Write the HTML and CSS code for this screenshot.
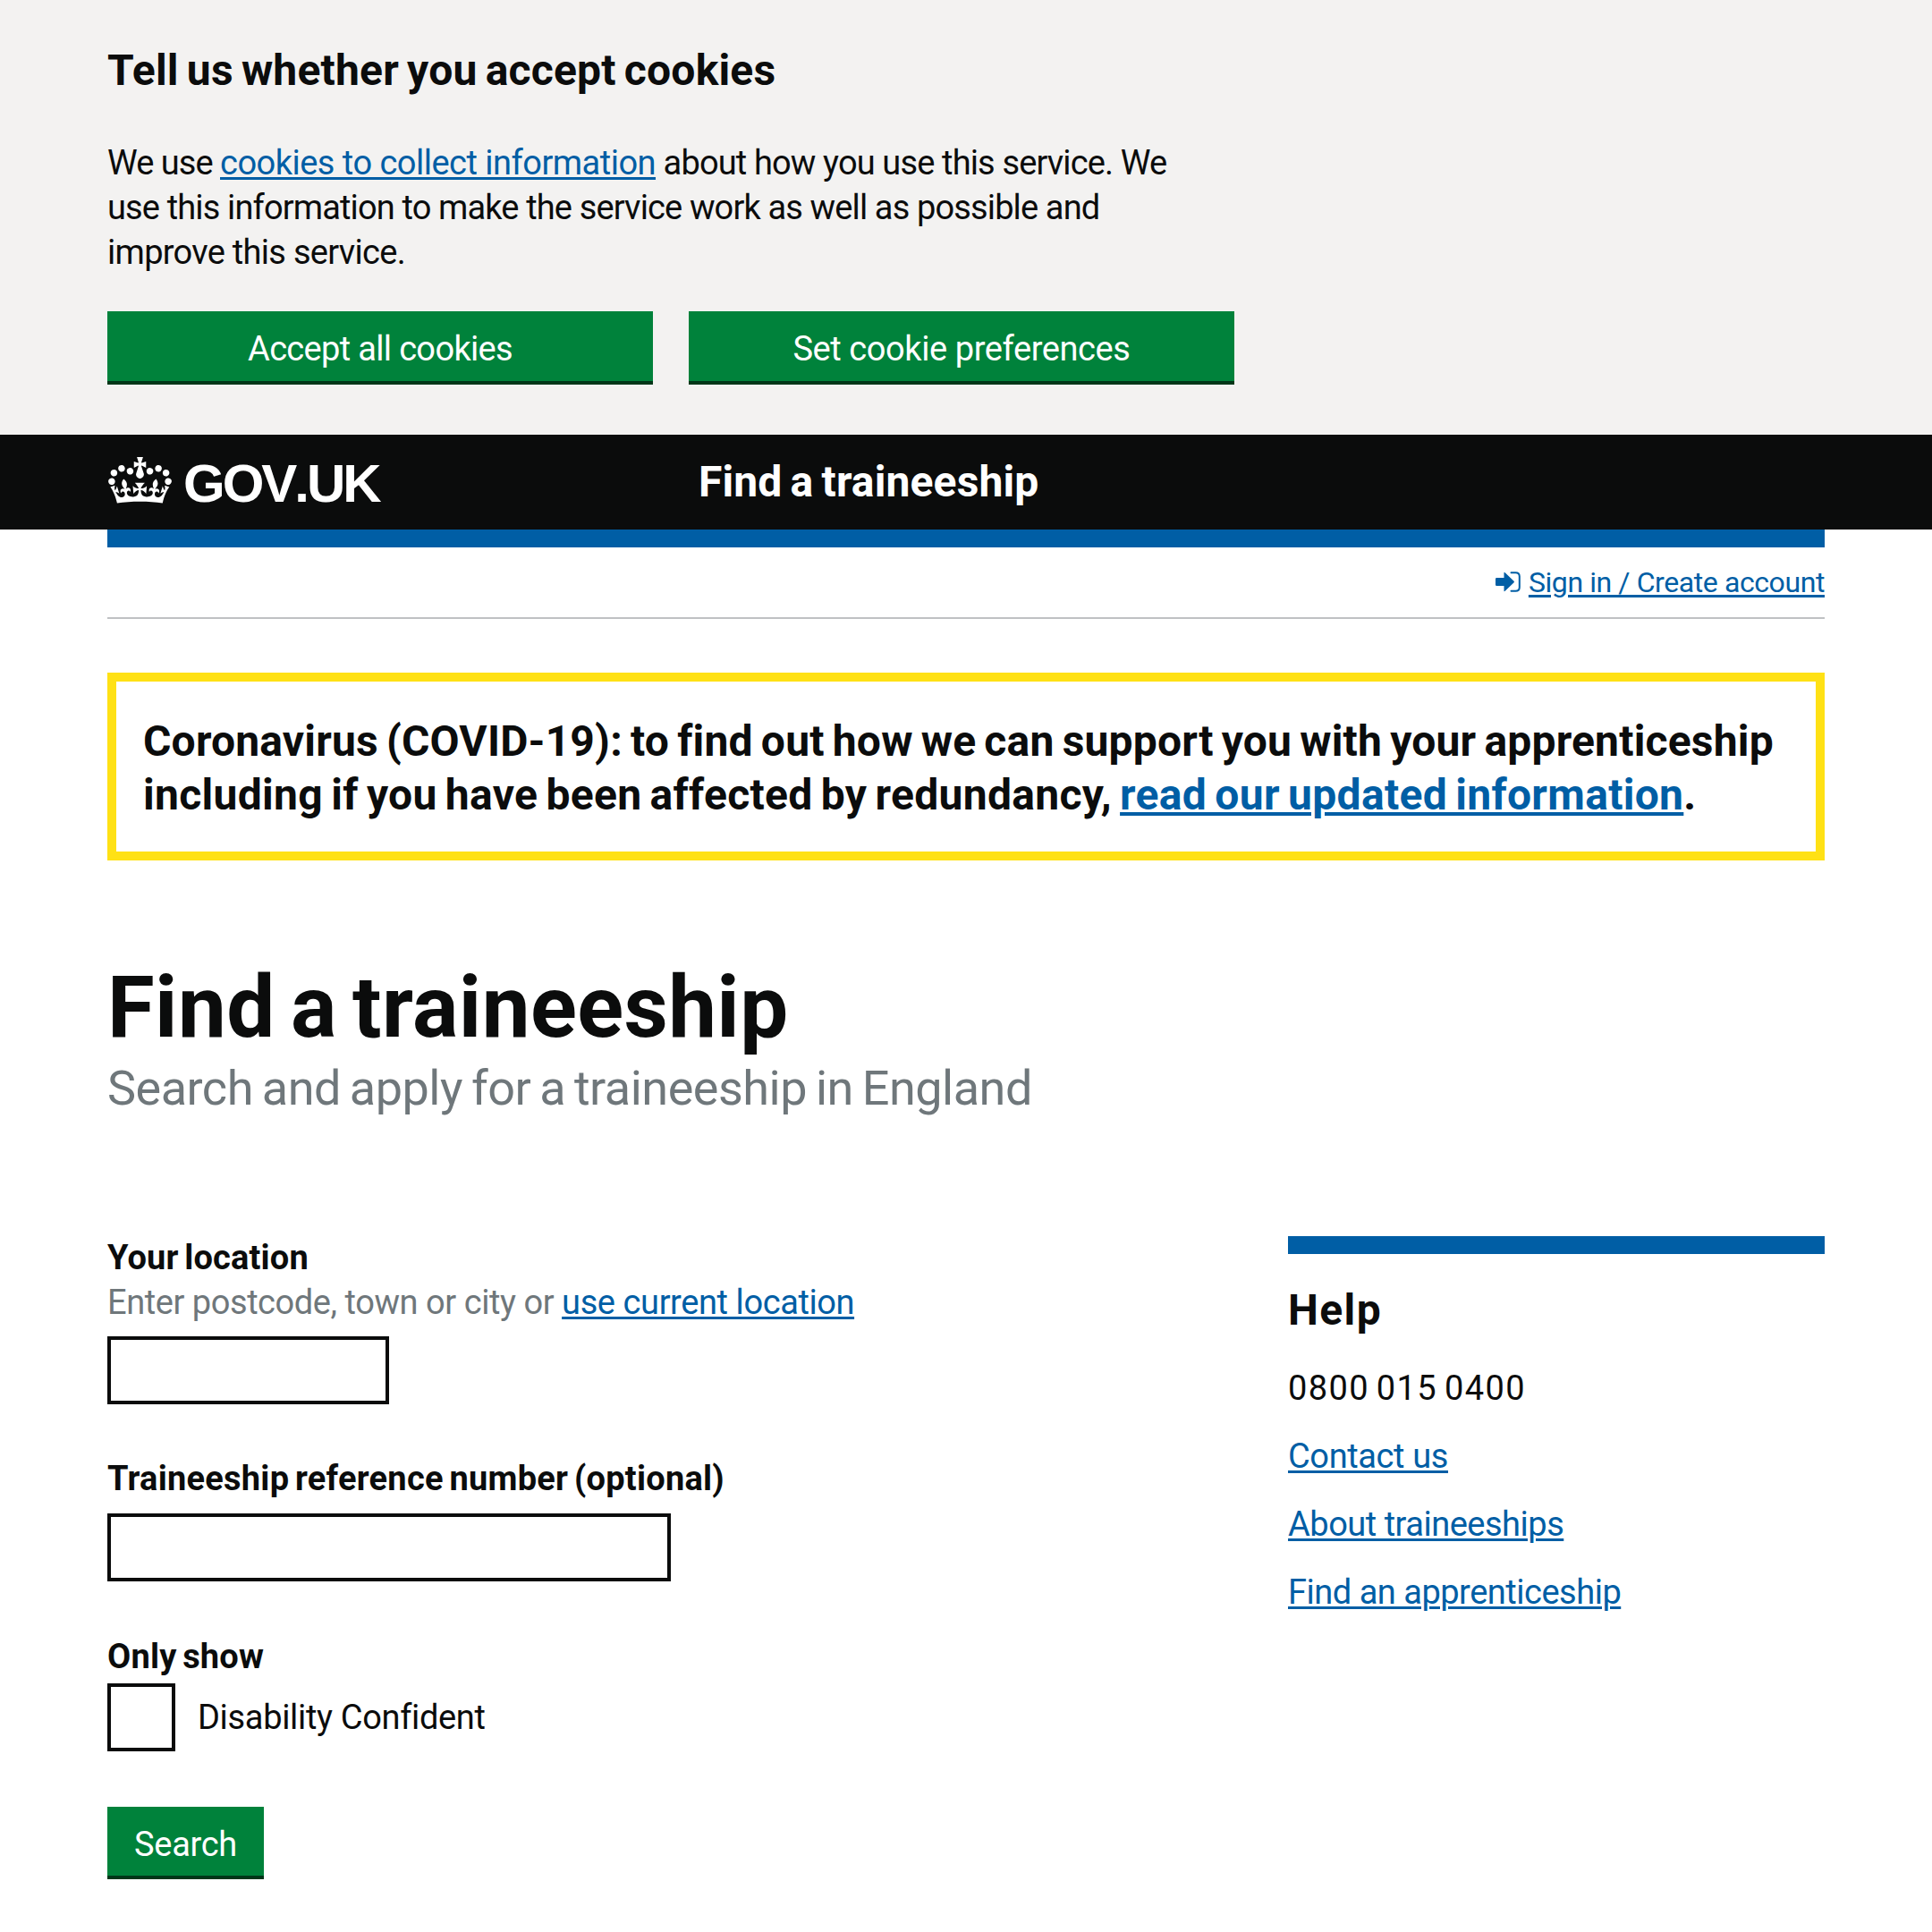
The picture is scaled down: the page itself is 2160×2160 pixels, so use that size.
FILE: index.html
```html
<!DOCTYPE html>
<html lang="en">
<head>
  <meta charset="utf-8">
  <title>Find a traineeship</title>
  <link rel="stylesheet" href="styles.css">
</head>
<body>
  <section class="cookie-banner">
    <div class="container">
      <h2 class="heading-m cookie-title">Tell us whether you accept cookies</h2>
      <p class="cookie-text"><span class="we-use">We use </span><a class="link cookie-link" href="#">cookies to collect information</a><span class="cookie-rest"> about how you use this service. We</span><br><span class="cookie-rest">use this information to make the service work as well as possible and</span><br><span class="cookie-end">improve this service.</span></p>
      <div class="cookie-actions">
        <button class="button accept">Accept all cookies</button>
        <button class="button preferences">Set cookie preferences</button>
      </div>
    </div>
  </section>

  <header class="header">
    <div class="container header-row">
      <a class="logo" href="#">
        <svg class="crown" viewBox="0 0 132 97" aria-hidden="true"><path fill="currentColor" fill-rule="evenodd" d="M25 30.2c3.5 1.5 7.7-.2 9.1-3.7 1.5-3.6-.2-7.8-3.9-9.2-3.6-1.4-7.6.3-9.1 3.9-1.4 3.5.3 7.5 3.9 9zM9 39.5c3.6 1.5 7.8-.2 9.2-3.7 1.5-3.6-.2-7.8-3.9-9.1-3.6-1.5-7.6.2-9.1 3.8-1.4 3.5.3 7.5 3.8 9zM4.4 57.2c3.5 1.5 7.7-.2 9.1-3.8 1.5-3.6-.2-7.7-3.9-9.1-3.5-1.5-7.6.3-9.1 3.8-1.4 3.5.3 7.6 3.9 9.1zm38.3-21.4c3.5 1.5 7.7-.2 9.1-3.8 1.5-3.6-.2-7.7-3.9-9.1-3.6-1.5-7.6.3-9.1 3.8-1.3 3.6.4 7.7 3.9 9.1zm64.4-5.6c-3.6 1.5-7.8-.2-9.1-3.7-1.5-3.6.2-7.8 3.8-9.2 3.6-1.4 7.7.3 9.2 3.9 1.3 3.5-.4 7.5-3.9 9zm15.9 9.3c-3.6 1.5-7.7-.2-9.1-3.7-1.5-3.6.2-7.8 3.7-9.1 3.6-1.5 7.7.2 9.2 3.8 1.5 3.5-.3 7.5-3.8 9zm4.7 17.7c-3.6 1.5-7.8-.2-9.2-3.8-1.5-3.6.2-7.7 3.9-9.1 3.6-1.5 7.7.3 9.2 3.8 1.3 3.5-.4 7.6-3.9 9.1zM89.3 35.8c-3.6 1.5-7.8-.2-9.2-3.8-1.4-3.6.2-7.7 3.9-9.1 3.6-1.5 7.7.3 9.2 3.8 1.4 3.6-.3 7.7-3.9 9.1zM69.7 17.7l8.9 4.7V9.3l-8.9 2.8c-.2-.3-.5-.6-.9-.9L72.4 0H59.6l3.5 11.2c-.3.3-.6.5-.9.9l-8.8-2.8v13.1l8.8-4.7c.3.3.6.7.9.9l-5 15.4v.1c-.2.8-.4 1.6-.4 2.4 0 4.1 3.1 7.5 7 8.1h.2c.3 0 .7.1 1 .1.4 0 .7 0 1-.1h.2c4-.6 7.1-4.1 7.1-8.1 0-.8-.1-1.7-.4-2.4V34l-5.1-15.4c.4-.2.7-.6 1-.9zM66 92.8c16.9 0 32.8 1.1 47.1 3.2 4-16.9 8.9-26.7 14-33.5l-9.6-3.4c1 4.9 1.1 7.2 0 10.2-1.5-1.4-3-4.3-4.2-8.7L108.6 76c2.8-2 5-3.2 7.5-3.3-4.4 9.4-10 11.9-13.6 11.2-4.3-.8-6.3-4.6-5.6-7.9 1-4.7 5.7-5.9 8-.5 4.3-8.7-3-11.4-7.6-8.8 7.1-7.2 7.9-13.5 2.1-21.1-8 6.1-8.1 12.3-4.5 20.8-4.7-5.4-12.1-2.5-9.5 6.2 3.4-5.2 7.9-2 7.2 3.1-.6 4.3-6.4 7.8-13.5 7.2-10.3-.9-10.9-8-11.2-13.8 2.5-.5 7.1 1.8 11 7.3L80.2 60c-4.1 4.4-8 5.3-12.3 5.4 1.4-4.4 8-11.6 8-11.6H55.5s6.4 7.2 7.9 11.6c-4.2-.1-8-1-12.3-5.4l1.4 16.4c3.9-5.5 8.5-7.7 10.9-7.3-.3 5.8-.9 12.8-11.1 13.8-7.2.6-12.9-2.9-13.5-7.2-.7-5 3.8-8.3 7.1-3.1 2.7-8.7-4.6-11.6-9.4-6.2 3.7-8.5 3.6-14.7-4.6-20.8-5.8 7.6-5 13.9 2.2 21.1-4.7-2.6-11.9.1-7.7 8.8 2.3-5.5 7.1-4.2 8.1.5.7 3.3-1.3 7.1-5.7 7.9-3.5.7-9-1.8-13.5-11.2 2.5.1 4.7 1.3 7.5 3.3l-4.7-15.4c-1.2 4.4-2.7 7.2-4.3 8.7-1.1-3-.9-5.3 0-10.2l-9.5 3.4c5 6.9 9.9 16.7 14 33.5 14.8-2.1 30.8-3.2 47.7-3.2z"/></svg>
        <span class="logo-text">GOV.UK</span>
      </a>
      <a class="service-name" href="#">Find a traineeship</a>
    </div>
  </header>

  <div class="container">
    <div class="header-bar"></div>
    <nav class="account">
      <svg class="signin-icon" viewBox="0 0 28 23" aria-hidden="true"><path fill="currentColor" d="M0 8.2Q0 7 1.2 7H9.5V1.6Q9.5 .2 10.7 1.2L20.6 10.7Q21.4 11.5 20.6 12.3L10.7 21.8Q9.5 22.8 9.5 21.4V16H1.2Q0 16 0 14.8Z"/><path fill="none" stroke="currentColor" stroke-width="2" stroke-linecap="round" d="M17.5 1.3H22.5Q26.8 1.3 26.8 5.6V17.4Q26.8 21.7 22.5 21.7H17.5"/></svg>
      <a class="link account-link" href="#">Sign in / Create account</a>
    </nav>

    <main>
      <div class="notice">
        <p class="notice-text"><span class="notice-first">Coronavirus (COVID-19): to find out how we can support you with your apprenticeship</span><br><span class="notice-second">including if you have been affected by redundancy, </span><a class="link notice-link" href="#">read our updated information</a>.</p>
      </div>

      <h1 class="title">Find a traineeship</h1>
      <p class="subtitle">Search and apply for a traineeship in England</p>

      <div class="columns">
        <form class="search-form">
          <label class="label location-label" for="location">Your location</label>
          <p class="hint"><span class="hint-text">Enter postcode, town or city or </span><a class="link hint-link" href="#">use current location</a></p>
          <input class="input input-short" id="location" type="text">
          <label class="label reference-label" for="reference">Traineeship reference number (optional)</label>
          <input class="input input-long" id="reference" type="text">
          <p class="label only-label">Only show</p>
          <label class="checkbox-row"><input class="checkbox" type="checkbox"><span class="checkbox-label">Disability Confident</span></label>
          <button class="button search" type="button">Search</button>
        </form>

        <aside class="help">
          <h2 class="heading-m help-title">Help</h2>
          <p class="phone">0800 015 0400</p>
          <p class="contact"><a class="link" href="#">Contact us</a></p>
          <p class="about"><a class="link" href="#">About traineeships</a></p>
          <p class="about"><a class="link" href="#">Find an apprenticeship</a></p>
        </aside>
      </div>
    </main>
  </div>
</body>
</html>
```
FILE: styles.css
```css
* {
  box-sizing: border-box;
}

body {
  margin: 0;
  background: #fff;
  color: #0b0c0c;
  font: 400 38px/50px Roboto, "Liberation Sans", sans-serif;
  font-variant-ligatures: none;
}

h1, h2, p {
  margin: 0;
}

.container {
  width: 1920px;
  margin: 0 auto;
}

.link {
  color: #005ea5;
  text-decoration: underline;
  text-decoration-thickness: 3px;
  text-underline-offset: 3px;
}

.heading-m {
  font-size: 48px;
  line-height: 60px;
  font-weight: 700;
  word-spacing: -3px;
}

.button {
  height: 82px;
  padding: 6px 0 0;
  border: 0;
  border-bottom: 4px solid #003618;
  background: #00823b;
  color: #fff;
  font: inherit;
  line-height: 72px;
  text-align: center;
}

/* Cookie banner */
.cookie-banner {
  padding: 49px 0 56px;
  background: #f3f2f1;
}

.cookie-title {
  margin-bottom: 48px;
  letter-spacing: 0.2px;
}

.cookie-text {
  margin-bottom: 41px;
  white-space: nowrap;
}

.we-use { letter-spacing: -0.98px; }
.cookie-link { letter-spacing: -0.51px; }
.cookie-rest { letter-spacing: -0.86px; }
.cookie-end { letter-spacing: -0.71px; }

.cookie-actions {
  display: flex;
  gap: 40px;
}

.cookie-actions .button {
  width: 610px;
}

.accept { letter-spacing: -0.67px; }
.preferences { letter-spacing: -0.41px; }

/* Header */
.header {
  background: #0b0c0c;
}

.header-row {
  display: flex;
  height: 106px;
}

.logo {
  display: flex;
  width: 661px;
  color: #fff;
  text-decoration: none;
}

.crown {
  width: 71px;
  height: 52px;
  margin: 25px 13px 0 1px;
}

.logo-text {
  font: 700 60px/110px "Liberation Sans", Arial, sans-serif;
  font-kerning: none;
  letter-spacing: -3px;
}

.service-name {
  color: #fff;
  font-size: 48px;
  font-weight: 700;
  line-height: 106px;
  letter-spacing: 0.14px;
  word-spacing: -3px;
  text-decoration: none;
}

.header-bar {
  height: 20px;
  background: #005ea5;
}

.account {
  display: flex;
  justify-content: flex-end;
  padding: 14px 0;
  border-bottom: 2px solid #bfc1c3;
  color: #005ea5;
}

.signin-icon {
  width: 28px;
  height: 23px;
  margin: 13px 9px 0 0;
}

.account-link {
  font-size: 32px;
  letter-spacing: -0.41px;
}

/* Notice */
.notice {
  margin-top: 60px;
  padding: 37px 0 33px 30px;
  border: 10px solid #ffe115;
}

.notice-text {
  font-size: 48px;
  font-weight: 700;
  line-height: 60px;
  white-space: nowrap;
  word-spacing: -3px;
}

.notice-first { letter-spacing: 0.19px; }
.notice-second { letter-spacing: 0.3px; }

.notice-link {
  letter-spacing: 0.31px;
  text-decoration-thickness: 4px;
}

.title {
  margin-top: 114px;
  font-size: 96px;
  line-height: 100px;
  letter-spacing: 0.43px;
  word-spacing: -7px;
}

.subtitle {
  margin-top: 6px;
  color: #6f777b;
  font-size: 54px;
  line-height: 70px;
  letter-spacing: -0.5px;
  word-spacing: -3px;
}

/* Columns */
.columns {
  display: grid;
  grid-template-columns: 1fr 600px;
  align-items: start;
  margin-top: 129px;
}

.search-form {
  display: flex;
  flex-direction: column;
  align-items: flex-start;
}

.label {
  font-weight: 700;
  word-spacing: -3px;
}

.location-label { letter-spacing: 0.17px; }

.reference-label {
  margin: 58px 0 14px;
  letter-spacing: 0.25px;
}

.only-label {
  margin: 59px 0 5px;
  letter-spacing: 0.2px;
}

.hint {
  margin-bottom: 13px;
  color: #6f777b;
}

.hint-text { letter-spacing: -0.44px; }
.hint-link { letter-spacing: -0.41px; }

.input {
  height: 76px;
  padding: 8px;
  border: 4px solid #0b0c0c;
  border-radius: 0;
  background: #fff;
  font: inherit;
}

.input-short { width: 315px; }
.input-long { width: 630px; }

.checkbox-row {
  display: flex;
  gap: 25px;
  height: 76px;
}

.checkbox {
  appearance: none;
  width: 76px;
  height: 76px;
  margin: 0;
  border: 4px solid #0b0c0c;
  background: #fff;
}

.checkbox-label {
  line-height: 76px;
  letter-spacing: -0.33px;
}

.search {
  width: 175px;
  height: 81px;
  margin-top: 62px;
  letter-spacing: -0.29px;
}

.help {
  margin-top: 1px;
  padding-top: 33px;
  border-top: 20px solid #005ea5;
}

.help-title {
  margin-bottom: 32px;
  letter-spacing: 1.37px;
}

.help p {
  margin-bottom: 26px;
}

.phone {
  letter-spacing: 1.4px;
  word-spacing: -3px;
}

.contact { letter-spacing: -0.38px; }
.about { letter-spacing: -0.49px; }
```
